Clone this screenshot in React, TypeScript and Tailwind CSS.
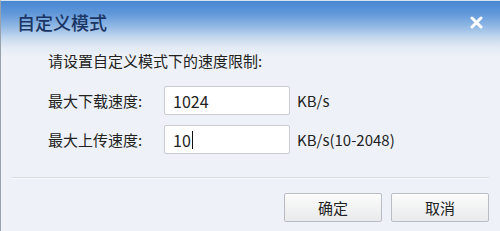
import React from 'react';

const font = { fontFamily: '"Noto Sans CJK SC", "Noto Sans", sans-serif' };

const SpeedRow: React.FC<{ label: string; value: string; unit: string; caret?: boolean }> = ({
  label,
  value,
  unit,
  caret,
}) => (
  <div className="flex items-center h-[29px]">
    <div className="w-[116px] text-[15px] text-[#222] leading-none">{label}</div>
    <div className="w-[126px] h-[29px] bg-white border border-[#c9cdd3] rounded-[2px] flex items-center pl-[8px] text-[16px] text-[#222] leading-none">
      <span>{value}</span>
      {caret && <span className="w-px h-[18px] bg-[#111] ml-px" />}
    </div>
    <div className="ml-[7px] text-[15px] text-[#222] leading-none">{unit}</div>
  </div>
);

const DialogButton: React.FC<{ children: React.ReactNode }> = ({ children }) => (
  <button className="w-[98px] h-[29px] rounded-[2px] border border-[#b9bdc3] bg-[linear-gradient(180deg,#fbfbfb,#e9eaec)] text-[15px] text-[#222] leading-none shadow-[inset_0_1px_0_#fff]">
    {children}
  </button>
);

export default function App() {
  return (
    <div
      style={font}
      className="w-[500px] h-[231px] flex flex-col border-l border-[#98a2ad] border-t border-t-[#d6e2f0] bg-[linear-gradient(180deg,#4887d2_0px,#5f97d9_12px,#90b7e4_25px,#c2d7ee_36px,#e2eaf5_46px,#eef2f8_56px)]"
    >
      {/* title bar */}
      <div className="h-[42px] flex items-center justify-between pl-[16px] pr-[16px]">
        <span className="text-[18px] font-medium text-[#1a3564] leading-none">自定义模式</span>
        <svg width="13" height="13" viewBox="0 0 13 13" className="mr-[1px]">
          <path d="M2 2 L11 11 M11 2 L2 11" stroke="#fff" strokeWidth="3" strokeLinecap="round" />
        </svg>
      </div>

      <div className="pl-[47px] mt-[8px] text-[15px] text-[#222] leading-[20px]">
        请设置自定义模式下的速度限制:
      </div>

      <div className="pl-[47px] mt-[15px] flex flex-col gap-[10px]">
        <SpeedRow label="最大下载速度:" value="1024" unit="KB/s" />
        <SpeedRow label="最大上传速度:" value="10" unit="KB/s(10-2048)" caret />
      </div>

      <div className="mx-[11px] mt-[23px] h-[2px] border-t border-[#dadee3] border-b border-b-[#f8f9fb]" />

      <div className="mt-[14px] flex justify-end gap-[9px] pr-[11px]">
        <DialogButton>确定</DialogButton>
        <DialogButton>取消</DialogButton>
      </div>
    </div>
  );
}
